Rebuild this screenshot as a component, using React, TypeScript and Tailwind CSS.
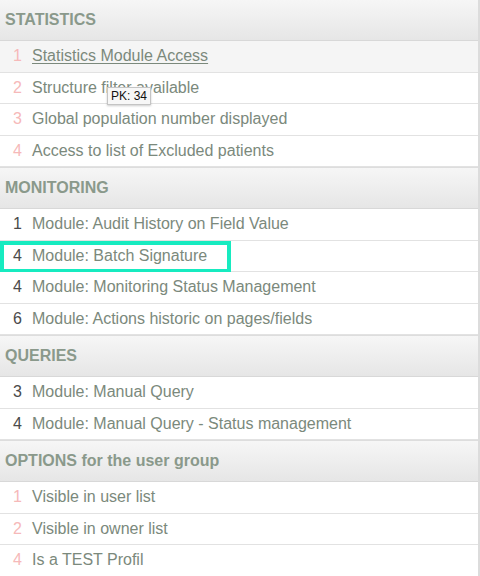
import React from 'react';

type Item = { n: number; label: string; underline?: boolean; hover?: boolean; marked?: boolean; tip?: string };
type Section = { title: string; pink: boolean; items: Item[] };

const sections: Section[] = [
  {
    title: 'STATISTICS',
    pink: true,
    items: [
      { n: 1, label: 'Statistics Module Access', underline: true, hover: true },
      { n: 2, label: 'Structure filter available', tip: 'PK: 34' },
      { n: 3, label: 'Global population number displayed' },
      { n: 4, label: 'Access to list of Excluded patients' },
    ],
  },
  {
    title: 'MONITORING',
    pink: false,
    items: [
      { n: 1, label: 'Module: Audit History on Field Value' },
      { n: 4, label: 'Module: Batch Signature', marked: true },
      { n: 4, label: 'Module: Monitoring Status Management' },
      { n: 6, label: 'Module: Actions historic on pages/fields' },
    ],
  },
  {
    title: 'QUERIES',
    pink: false,
    items: [
      { n: 3, label: 'Module: Manual Query' },
      { n: 4, label: 'Module: Manual Query - Status management' },
    ],
  },
  {
    title: 'OPTIONS for the user group',
    pink: true,
    items: [
      { n: 1, label: 'Visible in user list' },
      { n: 2, label: 'Visible in owner list' },
      { n: 4, label: 'Is a TEST Profil' },
    ],
  },
];

function Row({ item, pink }: { item: Item; pink: boolean }) {
  return (
    <div
      className={`relative flex items-center h-[31.5px] border-b border-[#e2e2e2] ${
        item.hover ? 'bg-[#f5f5f5]' : 'bg-white'
      }`}
    >
      <span className={`w-[22px] text-right ${pink ? 'text-[#f6b9b9]' : 'text-[#4a4a4a]'}`}>{item.n}</span>
      <span className={`ml-[10px] text-[#7b897c] ${item.underline ? 'underline underline-offset-2' : ''}`}>
        {item.label}
      </span>
      {item.marked && (
        <div className="absolute left-0 top-0 w-[231px] h-[32px] border-4 border-[#17ebc0]" />
      )}
      {item.tip && (
        <div className="absolute left-[107px] top-[14px] z-10 px-[3px] h-[18px] flex items-center bg-[#f7f7f7] border border-[#c4c4c4] shadow-[0_1px_2px_rgba(0,0,0,0.2)] text-[12px] leading-none text-[#111]">
          {item.tip}
        </div>
      )}
    </div>
  );
}

export default function App() {
  return (
    <div className="w-[480px] h-[576px] overflow-hidden bg-white border-r-2 border-[#dcdcdc] font-['Liberation_Sans',Arial,sans-serif] text-[16px]">
      {sections.map((s, i) => (
        <div key={i} className="border-b border-[#dddddd]">
          <div className="h-[41px] flex items-center pl-[5px] bg-gradient-to-b from-[#f6f6f6] to-[#e6e6e6] border-b border-[#d8d8d8] font-bold text-[#8a998b]">
            {s.title}
          </div>
          {s.items.map((it, j) => (
            <Row key={j} item={it} pink={s.pink} />
          ))}
        </div>
      ))}
    </div>
  );
}
